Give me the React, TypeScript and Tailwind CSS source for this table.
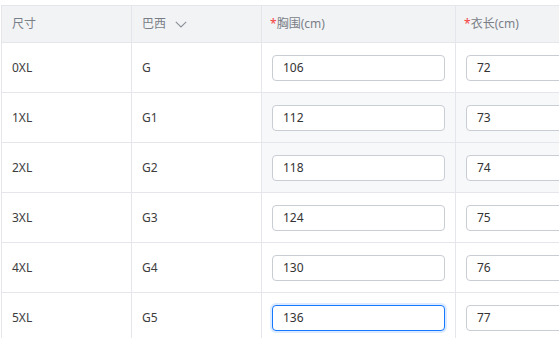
import React from 'react';

const rows = [
  { size: '0XL', br: 'G', chest: '106', len: '72' },
  { size: '1XL', br: 'G1', chest: '112', len: '73', hl: true },
  { size: '2XL', br: 'G2', chest: '118', len: '74', hl: true },
  { size: '3XL', br: 'G3', chest: '124', len: '75' },
  { size: '4XL', br: 'G4', chest: '130', len: '76' },
  { size: '5XL', br: 'G5', chest: '136', len: '77', focus: true },
];

export default function App() {
  return (
    <div className="h-[338px] w-[559px] overflow-hidden bg-white pt-[5px] pl-[1px] font-['Segoe_UI','Noto_Sans','Noto_Sans_CJK_SC',sans-serif] text-[12px]">
      <div className="w-[700px] border-l border-t border-[#e5e6eb]">
        {/* header */}
        <div className="flex h-[37px] bg-[#f2f3f5] text-[#7a7f87]">
          <div className="flex w-[130px] items-center border-r border-b border-[#e5e6eb] pl-[10px]">尺寸</div>
          <div className="flex w-[130px] items-center gap-[9px] border-r border-b border-[#e5e6eb] pl-[10px]">
            <span>巴西</span>
            <svg width="12" height="7" viewBox="0 0 12 7" fill="none" className="mt-[1px]">
              <polyline points="0.8,0.8 6,6 11.2,0.8" stroke="#8a8f97" strokeWidth="1.1" />
            </svg>
          </div>
          <div className="flex w-[194px] items-center border-r border-b border-[#e5e6eb] pl-[8px]">
            <span className="text-[#f53f3f]">*</span>胸围(cm)
          </div>
          <div className="flex flex-1 items-center border-r border-b border-[#e5e6eb] pl-[8px]">
            <span className="text-[#f53f3f]">*</span>衣长(cm)
          </div>
        </div>
        {rows.map((r) => (
          <div key={r.size} className="flex h-[50px] text-[#3d3d3d]">
            <div className="flex w-[130px] items-center border-r border-b border-[#e5e6eb] pl-[10px]">{r.size}</div>
            <div className="flex w-[130px] items-center border-r border-b border-[#e5e6eb] pl-[10px]">{r.br}</div>
            <div className={`flex w-[194px] items-center border-r border-b border-[#e5e6eb] px-[10px] ${r.hl ? 'bg-[#f7f8fa]' : ''}`}>
              <div
                className={`flex h-[26px] w-full items-center rounded-[4px] border bg-white px-[10px] text-[#333] ${
                  r.focus ? 'border-[#1677ff] shadow-[0_0_0_2px_rgba(22,119,255,0.15)]' : 'border-[#c9cdd4]'
                }`}
              >
                {r.chest}
              </div>
            </div>
            <div className={`flex flex-1 items-center border-r border-b border-[#e5e6eb] px-[10px] ${r.hl ? 'bg-[#f7f8fa]' : ''}`}>
              <div className="flex h-[26px] w-full items-center rounded-[4px] border border-[#c9cdd4] bg-white px-[10px] text-[#333]">
                {r.len}
              </div>
            </div>
          </div>
        ))}
      </div>
    </div>
  );
}
